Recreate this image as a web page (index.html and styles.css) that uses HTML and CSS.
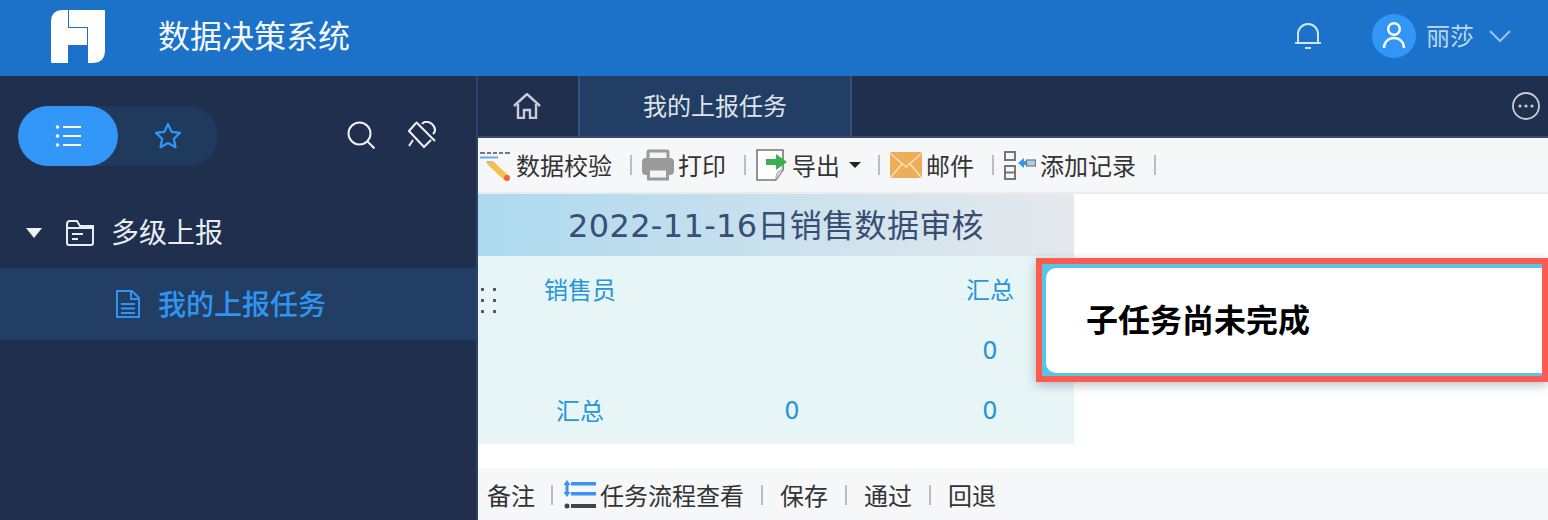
FILE: index.html
```html
<!DOCTYPE html>
<html lang="zh-CN">
<head>
<meta charset="utf-8">
<title>数据决策系统</title>
<link rel="stylesheet" href="styles.css">
</head>
<body>
<header class="topbar">
  <svg class="logo" viewBox="0 0 54 53" width="54" height="53"><path fill="#fff" d="M0 52V12Q0 0 12 0H17V18H36V35H17V53H1Q0 53 0 52Z"/><path fill="#fff" d="M18 0H53Q54 0 54 1V40Q54 53 41 53H37V17H18Z"/></svg>
  <div class="app-title">数据决策系统</div>
  <div class="top-right">
    <svg class="bell" viewBox="0 0 26 26" width="26" height="26" fill="none" stroke="#d5e4f5" stroke-width="2"><path d="M3 19V11a10 10 0 0 1 20 0v8"/><path d="M0 20h26"/><path d="M10 25h6"/></svg>
    <div class="avatar"><svg viewBox="0 0 44 44" width="44" height="44" fill="none" stroke="#fff" stroke-width="2.4"><circle cx="22" cy="15" r="5.8"/><path d="M12 34c0-6 4.500-10 10-10s10 4 10 10"/></svg></div>
    <div class="user-name">丽莎</div>
    <svg class="chev" viewBox="0 0 22 14" width="22" height="14" fill="none" stroke="#9cc1e8" stroke-width="2"><path d="M1 2l10 10L21 2"/></svg>
  </div>
</header>
<div class="main">
  <aside class="sidebar">
    <div class="side-tools">
      <div class="toggle">
        <div class="toggle-btn active">
          <svg viewBox="0 0 26 22" width="26" height="22" fill="#fff"><circle cx="2.500" cy="2" r="1.800"/><circle cx="2.500" cy="11" r="1.800"/><circle cx="2.500" cy="20" r="1.800"/><rect x="8" y="1" width="18" height="2"/><rect x="8" y="10" width="18" height="2"/><rect x="8" y="19" width="18" height="2"/></svg>
        </div>
        <div class="toggle-btn">
          <svg viewBox="0 0 28 28" width="28" height="28" fill="none" stroke="#3196f6" stroke-width="2.200" stroke-linejoin="round"><path d="M14 2l3.600 7.900 8.400 1-6.200 5.800 1.700 8.500L14 21l-7.500 4.200 1.700-8.500L2 10.900l8.400-1z"/></svg>
        </div>
      </div>
      <div class="tool-icons">
        <svg viewBox="0 0 28 28" width="28" height="28" fill="none" stroke="#eef1f6" stroke-width="2"><circle cx="12.500" cy="12.500" r="11"/><path d="M20.500 20.500l7 7"/></svg>
        <svg viewBox="0 0 28 28" width="28" height="28" fill="none" stroke="#eef1f6" stroke-width="2"><path d="M8 1l19 19"/><path d="M14 3C16 0 20 0 24 3C28 7 28 10 25 13"/><path d="M8 2L1 10l15 16 7-7"/><path d="M5 19L1 25"/></svg>
      </div>
    </div>
    <nav class="tree">
      <div class="tree-row">
        <span class="caret"></span>
        <svg viewBox="0 0 28 26" width="28" height="26" fill="none" stroke="#e8ecf3" stroke-width="2"><path d="M1 4a3 3 0 0 1 3-3h7l3 5h13v17a2 2 0 0 1-2 2H3a2 2 0 0 1-2-2z"/><path d="M1 8h26"/><path d="M6 14h11M6 19h6"/></svg>
        <span class="tree-label">多级上报</span>
      </div>
      <div class="tree-row current">
        <svg viewBox="0 0 24 28" width="24" height="28" fill="none" stroke="#2f95f2" stroke-width="2"><path d="M1 1h15l7 7v19H1z"/><path d="M15 1v8h8"/><path d="M5 14h14M5 18.500h14M5 23h14"/></svg>
        <span class="tree-label">我的上报任务</span>
      </div>
    </nav>
  </aside>
  <section class="content">
    <div class="tabs">
      <div class="tab home"><svg viewBox="0 0 28 26" width="28" height="26" fill="none" stroke="#c6cdd9" stroke-width="2.400"><path d="M1 13L14 1l13 12"/><path d="M5 11v14h6v-8h6v8h6V11"/></svg></div>
      <div class="tab tab-active">我的上报任务</div>
      <svg class="more" viewBox="0 0 28 28" width="28" height="28" fill="none" stroke="#c6cdd9" stroke-width="1.800"><circle cx="14" cy="14" r="13"/><g fill="#c6cdd9" stroke="none"><circle cx="8" cy="14" r="1.600"/><circle cx="14" cy="14" r="1.600"/><circle cx="20" cy="14" r="1.600"/></g></svg>
    </div>
    <div class="toolbar">
      <div class="tool first">
        <svg viewBox="0 0 32 32" width="32" height="32"><path d="M0 4h5M7 4h4M13 4h4M19 4h4M25 4h5" stroke="#777" stroke-width="2"/><path d="M0 8.500h18" stroke="#6aa9f5" stroke-width="2"/><path d="M13 12l16 15-5 4-16-15z" fill="#f3c14c"/><path d="M6 12l7 0-5 4z" fill="#c9b88a"/><circle cx="27" cy="29" r="3" fill="#f0603c"/></svg>
        <span>数据校验</span>
      </div>
      <i class="sep"></i>
      <div class="tool">
        <svg viewBox="0 0 32 32" width="32" height="32"><path d="M6 11V3a1 1 0 0 1 1-1h18a1 1 0 0 1 1 1v8" fill="#f4f4f4" stroke="#9a9a9a" stroke-width="3"/><rect x="0" y="9" width="32" height="17" rx="4" fill="#9a9a9a"/><rect x="6.500" y="20" width="19" height="10" fill="#f4f4f4" stroke="#9a9a9a" stroke-width="3"/></svg>
        <span>打印</span>
      </div>
      <i class="sep"></i>
      <div class="tool">
        <svg viewBox="0 0 32 32" width="32" height="32"><path d="M1 1h26v20l-7 10H1z" fill="#fff" stroke="#777" stroke-width="1.600"/><path d="M20 31c0-6 1-9 7-10z" fill="#ddd" stroke="#999"/><path d="M10 10h10V5l11 8-11 8v-5H10z" fill="#3cb04e"/></svg>
        <span>导出</span>
        <b class="drop"></b>
      </div>
      <i class="sep"></i>
      <div class="tool">
        <svg viewBox="0 0 32 26" width="32" height="26"><rect width="32" height="26" rx="2" fill="#eeae59"/><path d="M1 2l15 13L31 2M1 25l11-13M31 25L20 12" fill="none" stroke="#f9e0b8" stroke-width="1.600"/></svg>
        <span>邮件</span>
      </div>
      <i class="sep"></i>
      <div class="tool">
        <svg viewBox="0 0 32 30" width="32" height="30" fill="none"><rect x="1" y="2" width="10" height="8" stroke="#777" stroke-width="2"/><rect x="1" y="16" width="10" height="13" stroke="#777" stroke-width="2"/><path d="M1 22.500h10" stroke="#777" stroke-width="2"/><path d="M14 13l6-5v3h2v4h-2v3z" fill="#3b93f5"/><rect x="22.500" y="10" width="9" height="6" fill="#a8d2ec" stroke="#777" stroke-width="1.200"/></svg>
        <span>添加记录</span>
      </div>
      <i class="sep"></i>
    </div>
    <div class="report">
      <div class="report-title">2022-11-16日销售数据审核</div>
      <div class="report-table">
        <div class="cell cjk-top">销售员</div><div class="cell"></div><div class="cell cjk-top">汇总</div>
        <div class="cell"></div><div class="cell"></div><div class="cell">0</div>
        <div class="cell cjk-bottom">汇总</div><div class="cell">0</div><div class="cell">0</div>
        <svg class="grip" viewBox="0 0 16 26" width="16" height="26" fill="#4d5a6b"><rect x="1" y="0" width="3" height="3"/><rect x="13" y="0" width="3" height="3"/><rect x="1" y="11" width="3" height="3"/><rect x="13" y="11" width="3" height="3"/><rect x="1" y="22" width="3" height="3"/><rect x="13" y="22" width="3" height="3"/></svg>
      </div>
    </div>
    <div class="footer-bar">
      <span>备注</span>
      <i class="sep tight"></i>
      <div class="tool">
        <svg viewBox="0 0 32 30" width="32" height="30"><path d="M7 2h25v3.500H7zM7 12h25v3.500H7z" fill="#3b93f5"/><path d="M3 0l3.500 5H4.500v7h2L3 17l-3.500-5h2V5h-2z" fill="#3b93f5"/><path d="M7 24h25v4H7z" fill="#444"/><circle cx="3" cy="26" r="2.500" fill="#444"/></svg>
        <span>任务流程查看</span>
      </div>
      <i class="sep"></i>
      <span>保存</span>
      <i class="sep"></i>
      <span>通过</span>
      <i class="sep"></i>
      <span>回退</span>
    </div>
    <div class="notice">
      <div class="notice-inner"><div class="notice-body">子任务尚未完成</div></div>
    </div>
  </section>
</div>
</body>
</html>
```
FILE: styles.css
```css
* { box-sizing: border-box; }
html, body { margin: 0; height: 100%; overflow: hidden; }
body {
  width: 1548px;
  height: 520px;
  display: flex;
  flex-direction: column;
  font-family: "Noto Sans CJK SC", "Noto Sans", sans-serif;
  background: #fff;
}
.topbar {
  height: 76px;
  flex: none;
  background: #1c72c8;
  display: flex;
  align-items: center;
  padding-left: 51px;
  color: #fff;
}
.logo { display: block; margin-top: -3px; }
.app-title { margin-left: 53px; font-size: 32px; line-height: 40px; margin-bottom: 8px; color: #f4f8fd; }
.top-right { margin-left: auto; display: flex; align-items: center; padding-right: 37px; }
.bell { display: block; margin-right: 51px; margin-top: -4px; }
.avatar { width: 44px; height: 44px; border-radius: 50%; background: #3196f6; margin-top: -4px; }
.avatar svg { display: block; }
.user-name { margin-left: 10px; font-size: 24px; line-height: 30px; color: #bdd6f1; width: 48px; white-space: nowrap; margin-bottom: 6px; }
.chev { display: block; margin-left: 15px; margin-top: -4px; }

.main { flex: 1; display: flex; min-height: 0; }
.sidebar { width: 478px; flex: none; background: #202f4d; border-right: 2px solid #2f4166; }
.side-tools { display: flex; align-items: center; padding: 30px 40px 0 18px; }
.toggle { display: flex; width: 200px; height: 60px; border-radius: 30px; background: #1f3a5c; }
.toggle-btn { width: 100px; height: 60px; border-radius: 30px; display: flex; align-items: center; justify-content: center; }
.toggle-btn.active { background: #3196f6; }
.toggle-btn svg { display: block; }
.tool-icons { margin-left: auto; display: flex; gap: 33px; margin-top: -2px; }
.tool-icons svg { display: block; }
.tree { margin-top: 31px; }
.tree-row { height: 71px; display: flex; align-items: center; color: #e8ecf3; font-size: 28px; padding-left: 26px; }
.tree-row svg { display: block; flex: none; }
.caret { width: 0; height: 0; border-left: 8px solid transparent; border-right: 8px solid transparent; border-top: 10px solid #eef3fb; margin-right: 24px; }
.tree-label { margin-left: 17px; line-height: 36px; white-space: nowrap; margin-bottom: 4px; }
.tree-row.current { height: 72px; background: #233e64; padding-left: 116px; color: #2f95f2; font-weight: 500; }
.tree-row.current .tree-label { margin-left: 18px; margin-bottom: 2px; }

.content { flex: 1; position: relative; min-width: 0; display: flex; flex-direction: column; }
.tabs { height: 62px; flex: none; background: #202f4d; border-bottom: 2px solid #3b4a66; display: flex; align-items: stretch; position: relative; }
.tab { display: flex; align-items: center; justify-content: center; color: #dfe4ec; font-size: 24px; }
.tab.home { width: 100px; padding-right: 2px; }
.tab.home svg { display: block; }
.tab-active { width: 274px; background: #233e64; border-left: 2px solid #34527c; border-right: 2px solid #34527c; padding-bottom: 4px; }
.more { display: block; margin-left: auto; margin-right: 8px; margin-top: 16px; }

.toolbar {
  height: 56px;
  flex: none;
  background: #f6f7f9;
  border-bottom: 2px solid #ececee;
  display: flex;
  align-items: center;
  padding-left: 2px;
  font-size: 24px;
  color: #333;
}
.tool { display: flex; align-items: center; gap: 4px; white-space: nowrap; }
.tool svg { display: block; flex: none; }
.sep { display: block; width: 2px; height: 20px; background: #bdbdbd; margin: 0 10px 0 18px; flex: none; }
.drop { width: 0; height: 0; border-left: 6px solid transparent; border-right: 6px solid transparent; border-top: 6px solid #222; margin-left: 5px; margin-right: -1px; }
.toolbar .tool > span, .footer-bar span { line-height: 30px; }

.report { width: 596px; flex: none; }
.report-title {
  height: 62px;
  display: flex;
  align-items: center;
  justify-content: center;
  font-family: "DejaVu Sans", "Noto Sans CJK SC", sans-serif;
  font-size: 32px;
  letter-spacing: .35px;
  color: #3a4d75;
  background: linear-gradient(90deg, #acd9ef, #e6e9ec);
  padding-bottom: 4px;
}
.report-table {
  position: relative;
  background: #e7f5f7;
  height: 188px;
  display: grid;
  grid-template-columns: 204px 220px 172px;
  grid-template-rows: 68px 60px 60px;
  font-family: "DejaVu Sans", "Noto Sans CJK SC", sans-serif;
  font-size: 24px;
  color: #2795d9;
}
.cell { display: flex; align-items: center; justify-content: center; padding-bottom: 6px; }
.cell:nth-child(3n) { padding-left: 4px; }
.cell.cjk-top { padding-bottom: 4px; }
.cell.cjk-bottom { padding-bottom: 10px; }
.grip { position: absolute; left: 2px; top: 32px; display: block; }

.footer-bar {
  margin-top: auto;
  height: 52px;
  flex: none;
  background: #f6f7f9;
  display: flex;
  align-items: center;
  padding: 2px 0 0 9px;
  font-size: 24px;
  color: #333;
}
.footer-bar .sep { margin: 0 17px; }
.footer-bar .sep.tight { margin-right: 11px; margin-left: 16px; }

.notice {
  position: absolute;
  left: 558px;
  top: 182px;
  right: 0;
  height: 124px;
  border: 6px solid #fb5b51;
  background: #57c5e8;
  padding: 4px 0 3px 4px;
  box-shadow: 0 3px 10px rgba(30, 40, 60, .3);
}
.notice-inner { height: 100%; }
.notice-body {
  height: 100%;
  background: #fff;
  border-radius: 10px 0 0 10px;
  display: flex;
  align-items: center;
  padding: 0 0 6px 40px;
  font-size: 32px;
  font-weight: 700;
  color: #000;
}
```
